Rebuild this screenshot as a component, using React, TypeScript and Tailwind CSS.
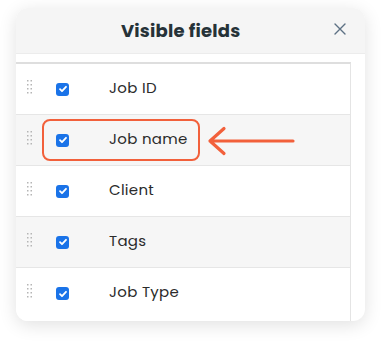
import React from 'react';

const fields = ['Job ID', 'Job name', 'Client', 'Tags', 'Job Type'];

const DragHandle: React.FC = () => (
  <svg width="6" height="15" viewBox="0 0 6 15" className="text-[#b5b5b5]">
    {[0, 1, 2, 3].map((r) => (
      <g key={r} fill="currentColor">
        <rect x="0" y={r * 4} width="1.5" height="1.5" />
        <rect x="3.5" y={r * 4} width="1.5" height="1.5" />
      </g>
    ))}
  </svg>
);

const CheckBox: React.FC = () => (
  <div className="w-[13px] h-[13px] rounded-[3px] bg-[#1a73e8] flex items-center justify-center">
    <svg width="10" height="10" viewBox="0 0 10 10" fill="none" stroke="white" strokeWidth={1.8} strokeLinecap="round" strokeLinejoin="round">
      <path d="M2 5.2l2 2 4-4.4" />
    </svg>
  </div>
);

export default function App() {
  return (
    <div className="relative w-[381px] h-[346px] bg-white px-4 pt-2" style={{ fontFamily: 'Poppins, Inter, "Noto Sans", sans-serif' }}>
      <div className="w-[349px] bg-white rounded-xl overflow-hidden shadow-[0_4px_18px_rgba(0,0,0,0.12)]">
        <div className="h-[46px] bg-[#f5f5f5] border-b border-[#ececec] flex items-center relative">
          <div className="flex-1 pl-[105px] text-[18px] font-bold text-[#263238] tracking-[0.2px]">Visible fields</div>
          <svg className="absolute left-[318px] top-[15px]" width="12" height="12" viewBox="0 0 12 12" fill="none" stroke="#5d7184" strokeWidth={1.4} strokeLinecap="round">
            <path d="M1 1l10 10M11 1L1 11" />
          </svg>
        </div>
        <div className="pt-[8px] pr-[14px]">
          <div className="border-t-2 border-[#dedede] border-r border-r-[#e4e4e4]">
            {fields.map((f, i) => (
              <div
                key={f}
                className={`flex items-center ${i % 2 === 1 ? 'bg-[#f6f6f6]' : 'bg-white'} ${i < fields.length - 1 ? 'h-[51px] border-b border-[#e6e6e6]' : 'h-[53px] pb-[2px]'}`}
              >
                <div className="w-[40px] pl-[11px] flex items-center -mt-[4px]">
                  <DragHandle />
                </div>
                <div className="w-[53px]">
                  <CheckBox />
                </div>
                <span className="text-[15px] text-[#2b2b2b] tracking-[0.3px] -mt-[2px]">{f}</span>
              </div>
            ))}
          </div>
        </div>
      </div>

      {/* highlight annotation */}
      <div className="absolute left-[42px] top-[119px] w-[158px] h-[42px] rounded-[8px] border-2 border-[#f2603b]" />
      <svg className="absolute left-[205px] top-[125px]" width="92" height="34" viewBox="0 0 92 34" fill="none" stroke="#f2603b" strokeWidth={3.2} strokeLinecap="round" strokeLinejoin="round">
        <path d="M5 16h83M19 3.5L5 16l14 12.5" />
      </svg>
    </div>
  );
}
